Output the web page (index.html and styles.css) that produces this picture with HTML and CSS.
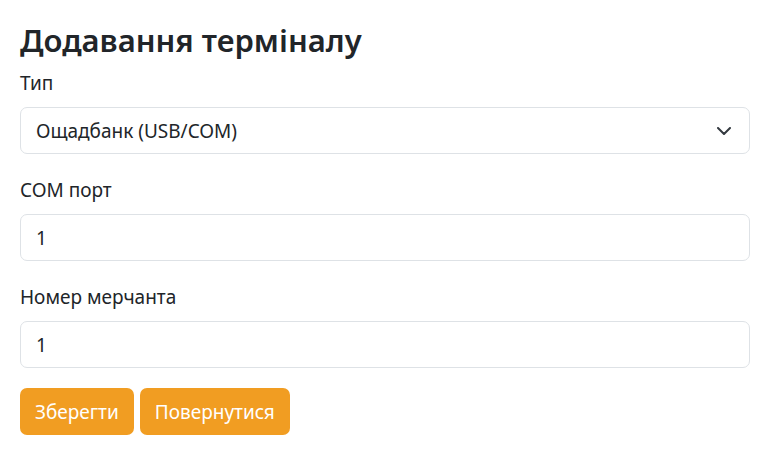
FILE: index.html
```html
<!DOCTYPE html>
<html lang="uk">
<head>
<meta charset="utf-8">
<link rel="stylesheet" href="styles.css">
</head>
<body>
<div class="page">
  <h2 class="title">Додавання терміналу</h2>
  <form class="form">
    <div class="group">
      <label class="label">Тип</label>
      <div class="select">
        <span>Ощадбанк (USB/COM)</span>
        <svg class="chev" width="14" height="8" viewBox="0 0 14 8"><path d="M1 1l6 6 6-6" fill="none" stroke="#343a40" stroke-width="2" stroke-linecap="round" stroke-linejoin="round"/></svg>
      </div>
    </div>
    <div class="group">
      <label class="label">COM порт</label>
      <div class="input">1</div>
    </div>
    <div class="group last">
      <label class="label">Номер мерчанта</label>
      <div class="input">1</div>
    </div>
    <div class="actions">
      <button type="button" class="btn">Зберегти</button>
      <button type="button" class="btn">Повернутися</button>
    </div>
  </form>
</div>
</body>
</html>
```
FILE: styles.css
```css
* { box-sizing: border-box; }
html, body { margin: 0; background: #fff; }
body {
  font-family: "Noto Sans", "Open Sans", sans-serif;
  color: #212529;
  font-size: 19px;
}
.page { padding: 18px 24px 0 20px; }
.title {
  margin: 0 0 9px;
  font-size: 31px;
  font-weight: 600;
  line-height: 44px;
}
.form { display: flex; flex-direction: column; }
.group { display: flex; flex-direction: column; margin-bottom: 24px; }
.group.last { margin-bottom: 20px; }
.label { display: block; line-height: 25px; margin-bottom: 11px; }
.select, .input {
  height: 47px;
  border: 1px solid #dee2e6;
  border-radius: 7px;
  padding: 0 15px;
  display: flex;
  align-items: center;
  font-size: 19px;
}
.select { justify-content: space-between; }
.chev { margin-right: 3px; }
.actions { display: flex; gap: 6px; }
.btn {
  font-family: inherit;
  font-size: 19px;
  color: #fff;
  background: #f19d22;
  border: 0;
  border-radius: 7px;
  height: 47px;
  padding: 0 15px;
}
```
